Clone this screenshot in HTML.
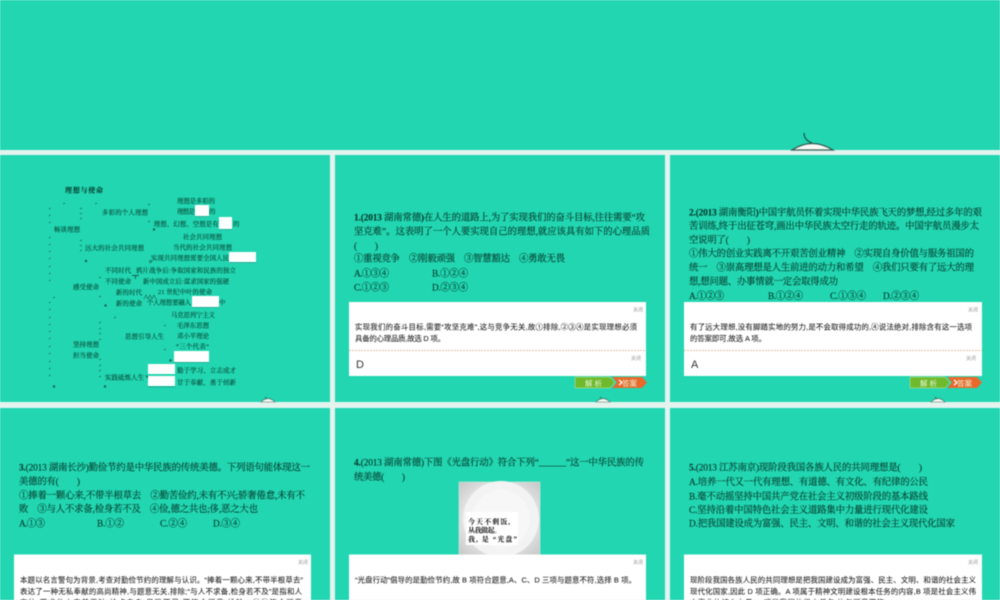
<!DOCTYPE html>
<html><head><meta charset="utf-8"><style>
html,body{margin:0;padding:0;width:1000px;height:600px;overflow:hidden;background:#e4f3ee}
svg{display:block;filter:blur(.4px)}
.q{font-family:"Liberation Serif","Noto Serif CJK SC",serif;font-size:9.4px;fill:#073f31;stroke:#073f31;stroke-width:.15px}
.b{font-weight:bold}
.m{font-family:"Liberation Serif","Noto Serif CJK SC",serif;font-size:6.4px;fill:#073f31;stroke:#073f31;stroke-width:.1px}
.a{font-family:"Liberation Sans","Noto Sans CJK SC",sans-serif;font-size:7.4px;fill:#222;stroke:#222;stroke-width:.08px}
.c{font-family:"Liberation Sans","Noto Sans CJK SC",sans-serif;font-size:5px;fill:#999}
.l{font-family:"Liberation Sans",sans-serif;font-size:11px;fill:#333}
.w{font-family:"Liberation Sans","Noto Sans CJK SC",sans-serif;font-size:7.5px;fill:#e6f7d8}
.p{font-family:"Liberation Serif","Noto Serif CJK SC",serif;font-size:7px;font-weight:bold;fill:#111}
</style></head><body>
<svg width="1000" height="600" viewBox="0 0 1000 600" xmlns="http://www.w3.org/2000/svg">
<defs><radialGradient id="pl" cx="50%" cy="50%" r="70%"><stop offset="65%" stop-color="#e2e2e2"/><stop offset="100%" stop-color="#c6c6c6"/></radialGradient></defs>
<rect width="1000" height="600" fill="#e4f3ee"/>
<g fill="#22d6b1">
<rect x="0" y="0" width="1000" height="150"/>
<rect x="0" y="155" width="330" height="247"/>
<rect x="335" y="155" width="330" height="247"/>
<rect x="670" y="155" width="330" height="247"/>
<rect x="0" y="408" width="330" height="192"/>
<rect x="335" y="408" width="330" height="192"/>
<rect x="670" y="408" width="330" height="192"/>
</g>
<!-- top ornament -->
<path d="M792 150Q812 137 833 150Z" fill="#f8f8f4" stroke="#2f5f52" stroke-width="1.200"/>
<path d="M804 133Q804 140 812 143" fill="none" stroke="#17604f" stroke-width="1.300"/>
<!-- small ornaments -->
<g fill="#f8f8f4" stroke="#3c6f60" stroke-width=".6">
<path d="M261 402Q268 395 275 402Z"/><path d="M596 402Q603 395 610 402Z"/><path d="M931 402Q938 395 945 402Z"/>
</g>
<g stroke="#17604f" stroke-width=".7" fill="none"><path d="M265 397l2 2"/><path d="M600 397l2 2"/><path d="M935 397l2 2"/></g>

<!-- mind map -->
<text class="m b" x="65" y="192.500" textLength="38" style="font-size:7px">理想与使命</text>
<text class="m" x="102" y="214.300" textLength="46">多彩的个人理想</text>
<text class="m" x="177" y="203" textLength="38">理想是多彩的</text>
<text class="m" x="177" y="213.300" textLength="18">理想是</text>
<text class="m" x="209" y="213.300">的</text>
<text class="m" x="153.700" y="226" textLength="65">理想、幻想、空想是有</text>
<text class="m" x="233" y="226">的</text>
<text class="m" x="54" y="231.300" textLength="26">畅谈理想</text>
<text class="m" x="183" y="239" textLength="39">社会共同理想</text>
<text class="m" x="85" y="250" textLength="59">远大的社会共同理想</text>
<text class="m" x="173" y="249.300" textLength="59">当代的社会共同理想</text>
<text class="m" x="151" y="260" textLength="78">实现共同理想需要全国人民</text>
<text class="m" x="105" y="272.300" textLength="26">不同时代</text>
<text class="m" x="136" y="272.300" textLength="100">鸦片战争后:争取国家和民族的独立</text>
<text class="m" x="105" y="283.300" textLength="26">不同使命</text>
<text class="m" x="143" y="283.300" textLength="86">新中国成立后:谋求国家的强硬</text>
<text class="m" x="73" y="289" textLength="26">感受使命</text>
<text class="m" x="116" y="294.300" textLength="26">新的时代</text>
<text class="m" x="158" y="294" textLength="54">21 世纪中叶的使命</text>
<text class="m" x="116" y="305.300" textLength="26">新的使命</text>
<text class="m" x="147" y="304.300" textLength="44">个人理想要融入</text>
<text class="m" x="219" y="304.300">中</text>
<text class="m" x="171" y="317" textLength="44">马克思列宁主义</text>
<text class="m" x="177" y="327.300" textLength="32">毛泽东思想</text>
<text class="m" x="125" y="338.300" textLength="39">思想引导人生</text>
<text class="m" x="177" y="338" textLength="32">邓小平理论</text>
<text class="m" x="176" y="348.600" textLength="33">“三个代表”</text>
<text class="m" x="73" y="346.300" textLength="26">坚持理想</text>
<text class="m" x="73" y="357.300" textLength="26">担当使命</text>
<text class="m" x="105" y="379.300" textLength="39">实践砥炼人生</text>
<text class="m" x="177" y="372.300" textLength="59">勤于学习、立志成才</text>
<text class="m" x="177" y="384.300" textLength="59">甘于奉献、勇于创新</text>
<g fill="#ffffff">
<rect x="195" y="205" width="14" height="11"/>
<rect x="219" y="217" width="13" height="12"/>
<rect x="229" y="252" width="27" height="10"/>
<rect x="192" y="296" width="27" height="11"/>
<rect x="174" y="351" width="35" height="11"/>
<rect x="148" y="364" width="27" height="10"/>
<rect x="148" y="376" width="27" height="10"/>
</g>
<g stroke="#1a8a78" stroke-width=".6" fill="none">
<path d="M195 216.500h14M219 229.500h13M229 262.500h27M192 307.500h27M174 362.500h35M148 386.800h27"/>
</g>
<g stroke="#15705c" stroke-width=".8" fill="none">
<path d="M49 209l1.500-1M49 216l1.500-1M49 223l1.500-1M49 238l1.500-1M49 245l1.500-1M49 252l1.500-1M49 259l1.500-1M49 267l1.500-1M49 274l1.500-1M49 281l1.500-1M49 303l1.500-1M49 310l1.500-1M49 318l1.500-1M49 325l1.500-1M49 332l1.500-1M49 339l1.500-1M49 347l1.500-1M49 354l1.500-1M49 362l1.500-1M49 369l1.500-1M49 376l1.500-1"/>
<path d="M80 209l2-1M80 214l2-1M80 219l2-1M80 241l2-1M80 246l2-1M80 251l2-1"/>
<path d="M99 278l2-1M99 297l2-1M99 323l2-1M99 329l2-1M99 334l2-1M99 340l2-1M99 360l2-1M99 366l2-1M99 371l2-1M99 377l2-1"/>
<path d="M63 204l2-1M95 204l2-1M148 205l2-1M148 222l2-1M114 318l2-1M164 326l2-1M164 350l2-1M53 298l2-1"/>
</g>
<g fill="#17604f">
<circle cx="154" cy="229.500" r="1.200"/><circle cx="86" cy="261" r="1.200"/><circle cx="105.500" cy="305.500" r="1.200"/><circle cx="170.500" cy="360.500" r="1.200"/><circle cx="54" cy="386.500" r="1.200"/><circle cx="105" cy="386.500" r="1.200"/>
<path d="M132 275h7v1h-3v3h-1v-3h-3z"/><path d="M145 375l3 1v3z"/>
</g>
<circle cx="150.500" cy="261.500" r="1" fill="none" stroke="#17604f" stroke-width=".7"/>
<path d="M144 299l2-4 2 4 2-4 2 4 2-4 2 4" fill="none" stroke="#17604f" stroke-width=".6"/>

<!-- Q1 -->
<text class="q" x="354" y="220.500" textLength="291"><tspan class="b">1.(2013</tspan> 湖南常德<tspan class="b">)</tspan>在人生的道路上,为了实现我们的奋斗目标,往往需要“攻</text>
<text class="q" x="354" y="234.600" textLength="296">坚克难”。这表明了一个人要实现自己的理想,就应该具有如下的心理品质</text>
<text class="q" x="354" y="249" textLength="24">(　　)</text>
<text class="q" x="354" y="261.500" textLength="211">①重视竞争　②刚毅顽强　③智慧豁达　④勇敢无畏</text>
<text class="q" x="354" y="276.300" textLength="35">A.①③④</text><text class="q" x="432" y="276.300" textLength="36">B.①②④</text>
<text class="q" x="354" y="290.300" textLength="35">C.①②③</text><text class="q" x="432" y="290.300" textLength="36">D.②③④</text>
<rect x="349" y="302" width="297" height="74" fill="#fff"/>
<path d="M349 350.500H646" stroke="#e2a98c" stroke-width=".7" stroke-dasharray="2 1"/>
<text class="c" x="633" y="311.500" textLength="10">关闭</text>
<text class="a" x="355" y="329.700" textLength="282">实现我们的奋斗目标,需要“攻坚克难”,这与竞争无关,故①排除,②③④是实现理想必须</text>
<text class="a" x="355" y="341" textLength="90">具备的心理品质,故选 D 项。</text>
<text class="c" x="631" y="360" textLength="10">关闭</text>
<text class="l" x="356" y="368">D</text>
<polygon points="575,377 610,377 615,382.500 610,388 575,388" fill="#6fba2c" stroke="#c8e8a8" stroke-width=".5"/>
<polygon points="612,377 642,377 647,382.500 642,388 612,388 617,382.500" fill="#e9692c"/>
<text class="w" x="585" y="386" textLength="17">解析</text>
<path d="M619 380l3 2.500-3 2.500" fill="none" stroke="#fff" stroke-width="1.200"/>
<text class="w" x="622" y="386" textLength="15">答案</text>

<!-- Q2 -->
<text class="q" x="689" y="215.300" textLength="293"><tspan class="b">2.(2013</tspan> 湖南衡阳<tspan class="b">)</tspan>中国宇航员怀着实现中华民族飞天的梦想,经过多年的艰</text>
<text class="q" x="689" y="229" textLength="290">苦训练,终于出征苍穹,画出中华民族太空行走的轨迹。中国宇航员漫步太</text>
<text class="q" x="689" y="243" textLength="61">空说明了(　　)</text>
<text class="q" x="689" y="256.600" textLength="285">①伟大的创业实践离不开艰苦创业精神　②实现自身价值与服务祖国的</text>
<text class="q" x="689" y="270.300" textLength="285">统一　③崇高理想是人生前进的动力和希望　④我们只要有了远大的理</text>
<text class="q" x="689" y="284.300" textLength="149">想,想问题、办事情就一定会取得成功</text>
<text class="q" x="689" y="299" textLength="35">A.①②③</text><text class="q" x="768" y="299" textLength="35">B.①②④</text><text class="q" x="830" y="299" textLength="36">C.①③④</text><text class="q" x="883" y="299" textLength="36">D.②③④</text>
<rect x="684" y="302" width="298" height="74" fill="#fff"/>
<path d="M684 350.500H982" stroke="#e2a98c" stroke-width=".7" stroke-dasharray="2 1"/>
<text class="c" x="968" y="311.500" textLength="10">关闭</text>
<text class="a" x="690" y="329.700" textLength="282">有了远大理想,没有脚踏实地的努力,是不会取得成功的,④说法绝对,排除含有这一选项</text>
<text class="a" x="690" y="341" textLength="76">的答案即可,故选 A 项。</text>
<text class="c" x="966" y="360" textLength="10">关闭</text>
<text class="l" x="691" y="368">A</text>
<polygon points="910,377 945,377 950,382.500 945,388 910,388" fill="#6fba2c" stroke="#c8e8a8" stroke-width=".5"/>
<polygon points="947,377 977,377 982,382.500 977,388 947,388 952,382.500" fill="#e9692c"/>
<text class="w" x="920" y="386" textLength="17">解析</text>
<path d="M954 380l3 2.500-3 2.500" fill="none" stroke="#fff" stroke-width="1.200"/>
<text class="w" x="957" y="386" textLength="15">答案</text>

<!-- Q3 -->
<text class="q" x="19" y="470.300" textLength="291"><tspan class="b">3.</tspan>(2013 湖南长沙)勤俭节约是中华民族的传统美德。下列语句能体现这一</text>
<text class="q" x="19" y="484.300" textLength="61">美德的有(　　)</text>
<text class="q" x="19" y="498.300" textLength="286">①捧着一颗心来,不带半根草去　②勤苦俭约,未有不兴;骄奢倦怠,未有不</text>
<text class="q" x="19" y="512" textLength="239">败　③与人不求备,检身若不及　④俭,德之共也;侈,恶之大也</text>
<text class="q" x="19" y="526.300" textLength="26">A.①③</text><text class="q" x="97" y="526.300" textLength="27">B.①②</text><text class="q" x="160" y="526.300" textLength="27">C.②④</text><text class="q" x="213" y="526.300" textLength="27">D.③④</text>
<rect x="14" y="554.500" width="297" height="46" fill="#fff"/>
<text class="c" x="298" y="564" textLength="10">关闭</text>
<text class="a" x="20" y="582.700" textLength="283">本题以名言警句为背景,考查对勤俭节约的理解与认识。“捧着一颗心来,不带半根草去”</text>
<text class="a" x="20" y="594" textLength="282">表达了一种无私奉献的高尚精神,与题意无关,排除;“与人不求备,检身若不及”是指和人</text>
<text class="a" x="20" y="605" textLength="282">交往,不求他人完美无缺,检点自身,只恐不足,不符合题意,排除。②④符合题意</text>

<!-- Q4 -->
<text class="q" x="354" y="465.300" textLength="290"><tspan class="b">4.</tspan>(2013 湖南常德)下图《光盘行动》符合下列“______”这一中华民族的传</text>
<text class="q" x="354" y="480" textLength="51">统美德(　　)</text>
<rect x="459" y="482" width="81" height="73" fill="url(#pl)" stroke="#d8efe8" stroke-width=".5"/>
<circle cx="501" cy="519" r="38" fill="#f3f3f3"/>
<circle cx="501" cy="519" r="29" fill="#f7f7f7"/>
<rect x="466" y="512" width="52" height="33" fill="#fff"/>
<text class="p" x="468" y="524" textLength="42">今天不剩饭,</text>
<text class="p" x="468" y="532.500" textLength="33">从我做起。</text>
<text class="p" x="468" y="541.500" textLength="49">我, 是 “光盘”</text>
<rect x="349" y="554.500" width="297" height="46" fill="#fff"/>
<text class="c" x="633" y="564" textLength="10">关闭</text>
<text class="a" x="355" y="582.700" textLength="281">“光盘行动”倡导的是勤俭节约,故 B 项符合题意,A、C、D 三项与题意不符,选择 B 项。</text>

<!-- Q5 -->
<text class="q" x="689" y="470.300" textLength="233"><tspan class="b">5.</tspan>(2013 江苏南京)现阶段我国各族人民的共同理想是(　　)</text>
<text class="q" x="689" y="485" textLength="239">A.培养一代又一代有理想、有道德、有文化、有纪律的公民</text>
<text class="q" x="689" y="499.300" textLength="239">B.毫不动摇坚持中国共产党在社会主义初级阶段的基本路线</text>
<text class="q" x="689" y="513" textLength="239">C.坚持沿着中国特色社会主义道路集中力量进行现代化建设</text>
<text class="q" x="689" y="526.300" textLength="266">D.把我国建设成为富强、民主、文明、和谐的社会主义现代化国家</text>
<rect x="684" y="554.500" width="298" height="46" fill="#fff"/>
<text class="c" x="968" y="564" textLength="10">关闭</text>
<text class="a" x="690" y="582.700" textLength="286">现阶段我国各族人民的共同理想是把我国建设成为富强、民主、文明、和谐的社会主义</text>
<text class="a" x="690" y="594" textLength="286">现代化国家,因此 D 项正确。A 项属于精神文明建设根本任务的内容,B 项是社会主义伟</text>
<text class="a" x="690" y="605" textLength="202">大事业的核心力量,C 项是我国的根本任务,均与题意不符。</text>
</svg>
</body></html>
